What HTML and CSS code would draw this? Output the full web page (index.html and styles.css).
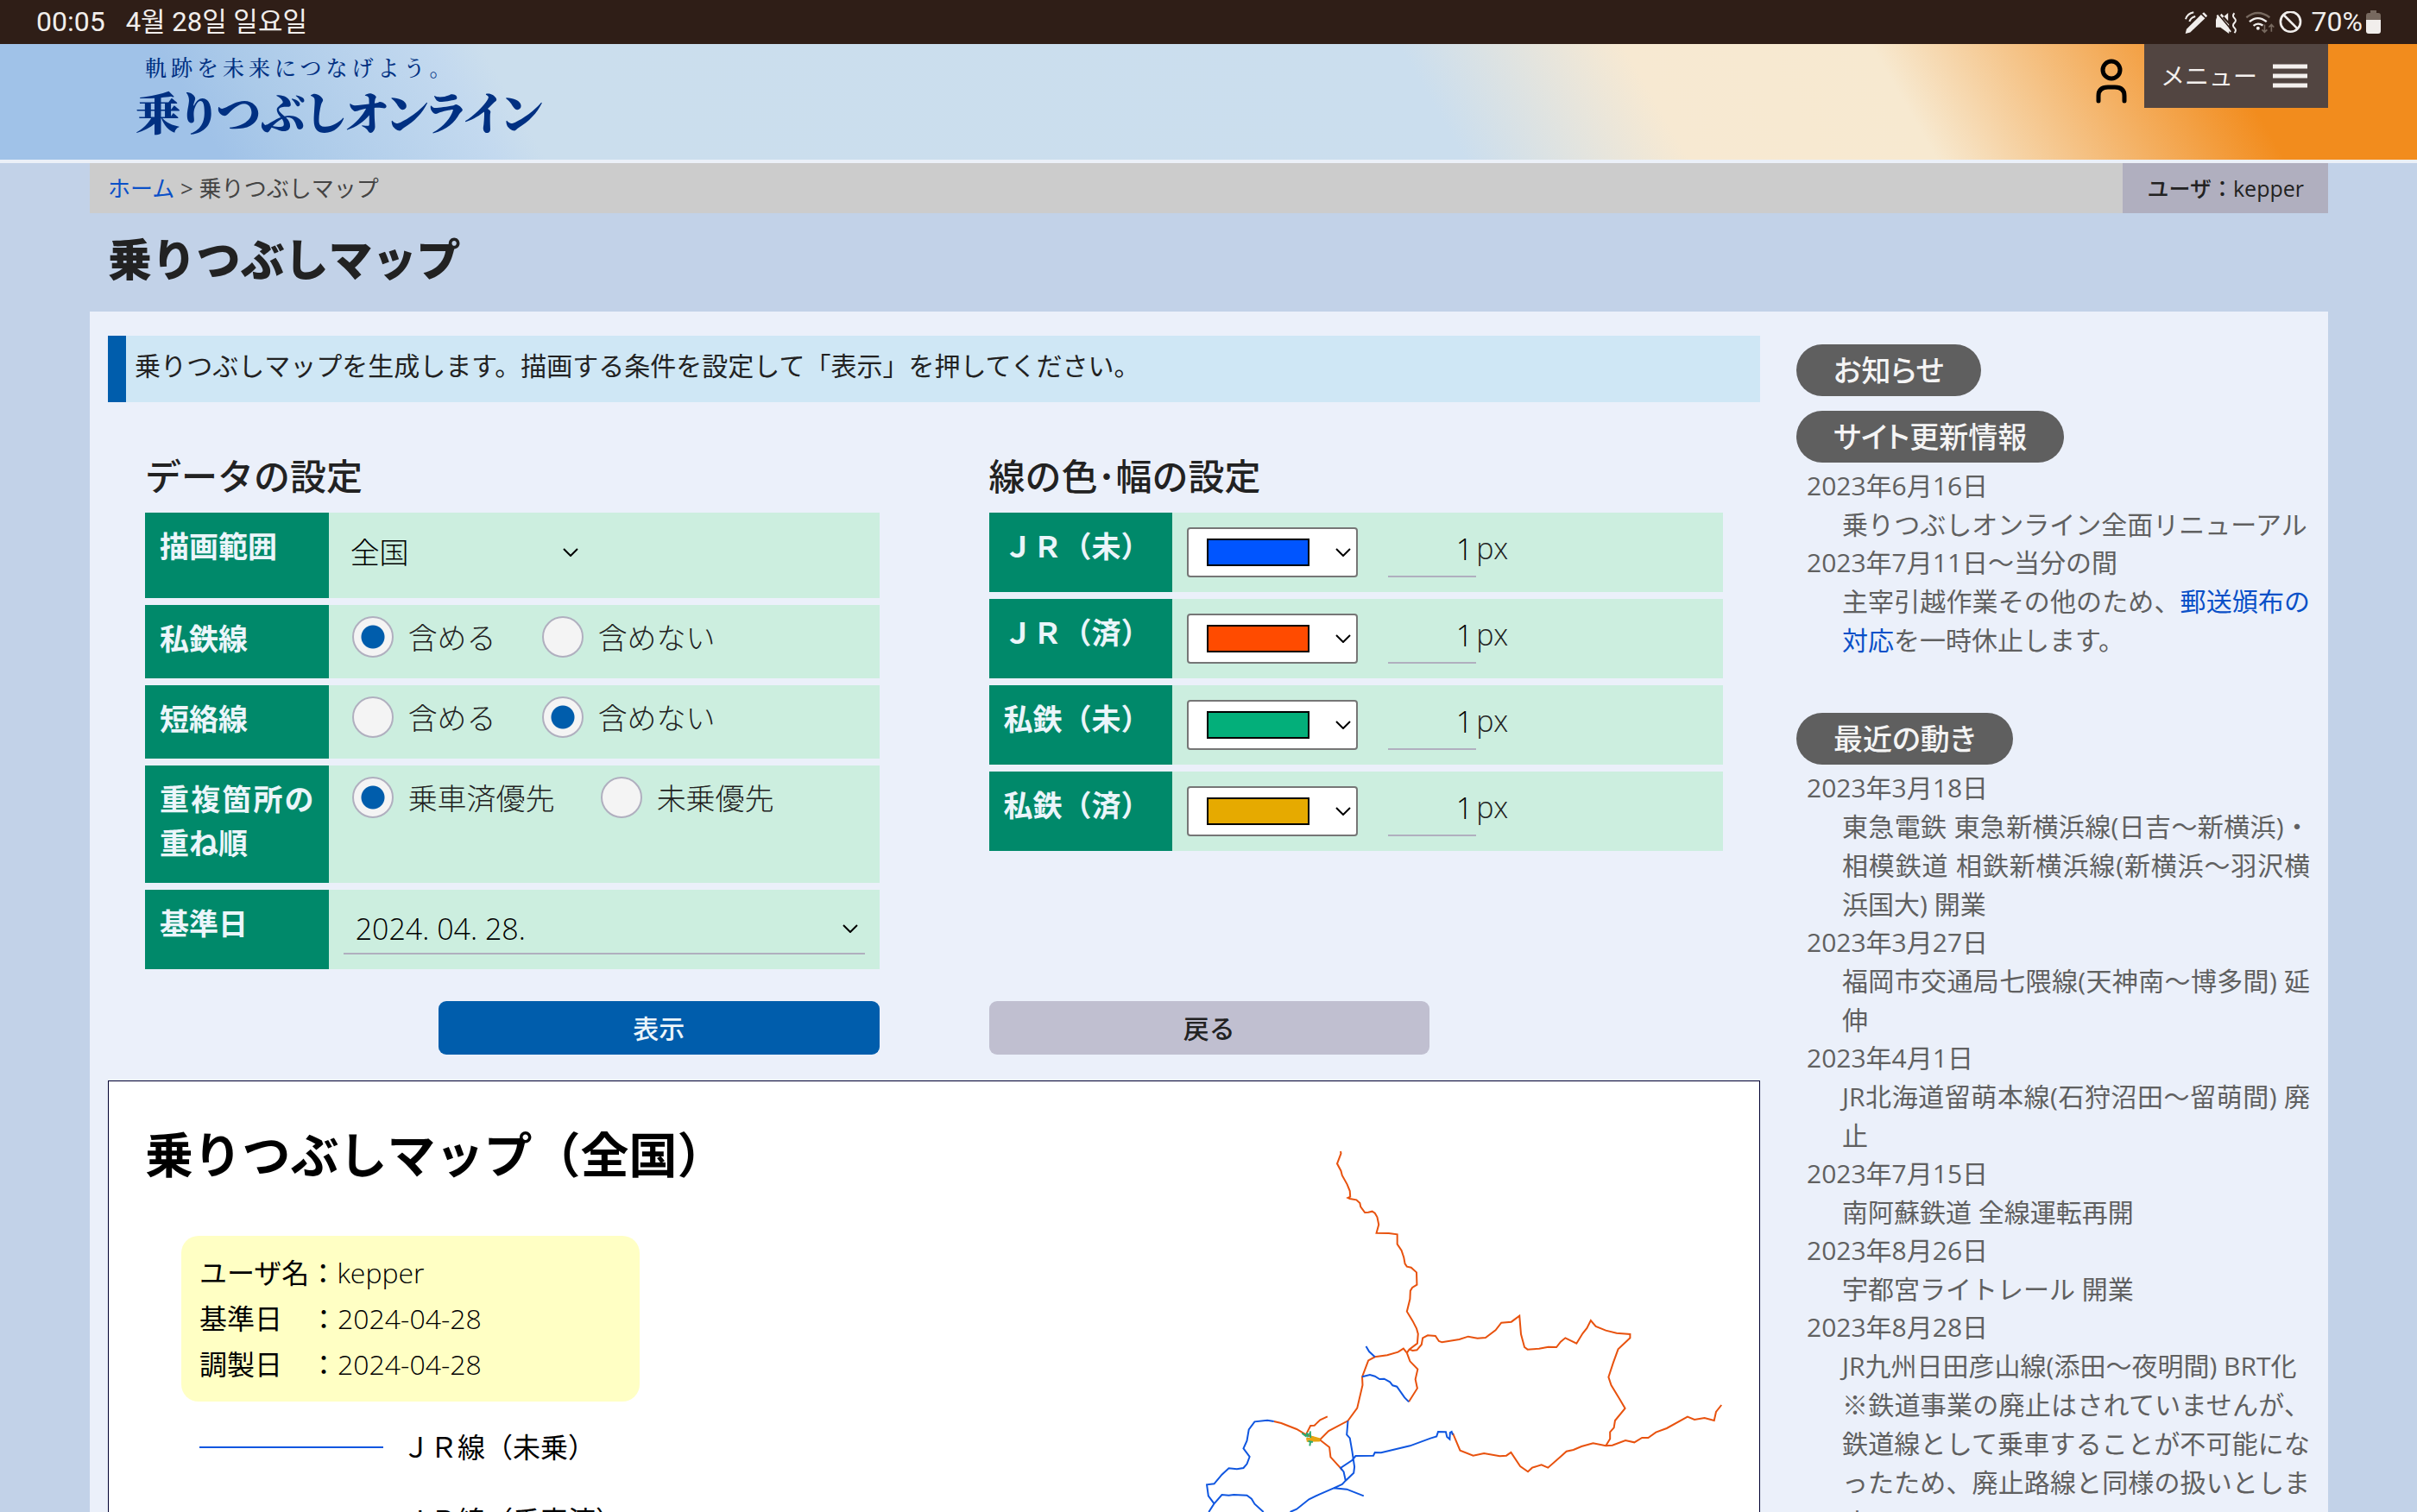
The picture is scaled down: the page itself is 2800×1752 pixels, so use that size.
FILE: index.html
```html
<!DOCTYPE html>
<html lang="ja">
<head>
<meta charset="utf-8">
<meta name="viewport" content="width=device-width, initial-scale=1">
<title>乗りつぶしマップ - 乗りつぶしオンライン</title>
<link rel="stylesheet" href="styles.css">
</head>
<body>
<div class="screen">
  <div class="status" lang="ko">
    <div class="status-left"><span>00:05</span><span class="status-date">4월 28일 일요일</span></div>
    <div class="status-right">
      <svg class="status-icons" viewBox="0 0 420 100" aria-hidden="true">
        <g fill="none" stroke="#f1eeec" stroke-width="7">
          <path d="M4 28Q10 8 32 4M17 36Q22 22 38 18" stroke-width="6"/>
          <path d="M3 79l4-16L58 12l14 13L20 74z" fill="#f1eeec" stroke="none"/>
          <path d="M62 8l6-4 12 12-5 6z" fill="#f1eeec" stroke="none"/>
          <path d="M110 30h14L153 6v28L130 8M110 30v27h16l30 22V46L118 8" fill="#f1eeec" stroke="none"/>
          <path d="M116 8l46 54" stroke="#2f1e17" stroke-width="5"/>
          <path d="M114 14l48 58" stroke-width="6"/>
          <path d="M175 7q-9 9 0 17t0 17t0 17t0 18" stroke-width="6"/>
          <path d="M217 22Q257-10 299 22" stroke="#77695f"/>
          <path d="M228 37Q257 12 288 37M242 51Q257 38 275 50"/>
          <circle cx="258" cy="60" r="6" fill="#f1eeec" stroke="none"/>
          <path d="M281 47v26M272 65l9 9 9-9M305 72V47M296 56l9-9 9 9" stroke="#77695f" stroke-width="5"/>
          <circle cx="372" cy="37" r="35" stroke-width="8"/>
          <path d="M348 13l48 48" stroke-width="8"/>
        </g>
      </svg>
      <span>70%</span>
      <svg class="battery" viewBox="0 0 17 27" aria-hidden="true">
        <path d="M5 0h7v3h2q3 0 3 3v5H0V6q0-3 3-3h2z" fill="#77695f"/>
        <path d="M0 11h17v13q0 3-3 3H3q-3 0-3-3z" fill="#f1eeec"/>
      </svg>
    </div>
  </div>

  <header class="header">
    <div class="logo">
      <p class="tagline">軌跡を未来につなげよう。</p>
      <p class="site-name">乗りつぶしオンライン</p>
    </div>
    <div class="header-tools">
      <svg class="person" viewBox="0 0 36 52" fill="none" stroke="#000" stroke-width="5" stroke-linecap="round" role="img" aria-label="ユーザ">
        <circle cx="18" cy="13" r="10"/>
        <path d="M3 49V43Q3 33 14 33h8Q33 33 33 43V49"/>
      </svg>
      <button class="menu" type="button">メニュー
        <svg class="bars" viewBox="0 0 40 28" aria-hidden="true"><path d="M0 3h40M0 14h40M0 25h40" stroke="#f4f0ee" stroke-width="5"/></svg>
      </button>
    </div>
  </header>

  <div class="wrap">
    <div class="crumbs">
      <nav class="crumb-path"><a href="#">ホーム</a> &gt; 乗りつぶしマップ</nav>
      <div class="user">ユーザ：kepper</div>
    </div>
    <h1 class="page-title">乗りつぶしマップ</h1>

    <div class="panel">
      <main class="main">
        <p class="notice">乗りつぶしマップを生成します。描画する条件を設定して「表示」を押してください。</p>

        <form class="form">
          <div class="columns">
            <section class="settings">
              <h2 class="settings-title">データの設定</h2>
              <div class="row">
                <label class="name" for="area">描画範囲</label>
                <div class="field">
                  <span class="picker area">
                    <select id="area"><option>全国</option></select>
                    <svg class="chevron" viewBox="0 0 18 10" aria-hidden="true"><path d="M1 1l8 8 8-8"/></svg>
                  </span>
                </div>
              </div>
              <div class="row">
                <span class="name" id="n-private">私鉄線</span>
                <div class="field radios" role="radiogroup" aria-labelledby="n-private">
                  <label><input type="radio" name="private" checked>含める</label>
                  <label><input type="radio" name="private">含めない</label>
                </div>
              </div>
              <div class="row">
                <span class="name" id="n-short">短絡線</span>
                <div class="field radios" role="radiogroup" aria-labelledby="n-short">
                  <label><input type="radio" name="short">含める</label>
                  <label><input type="radio" name="short" checked>含めない</label>
                </div>
              </div>
              <div class="row">
                <span class="name" id="n-order">重複箇所の重ね順</span>
                <div class="field radios" role="radiogroup" aria-labelledby="n-order">
                  <label><input type="radio" name="order" checked>乗車済優先</label>
                  <label><input type="radio" name="order">未乗優先</label>
                </div>
              </div>
              <div class="row">
                <label class="name" for="date">基準日</label>
                <div class="field">
                  <span class="picker date">
                    <input id="date" type="text" value="2024. 04. 28.">
                    <svg class="chevron" viewBox="0 0 18 10" aria-hidden="true"><path d="M1 1l8 8 8-8"/></svg>
                  </span>
                </div>
              </div>
            </section>

            <section class="settings">
              <h2 class="settings-title">線の色･幅の設定</h2>
              <div class="row">
                <label class="name" for="c1">ＪＲ（未）</label>
                <div class="field line-style">
                  <span class="picker color"><input id="c1" type="color" value="#0055ff"><svg class="chevron" viewBox="0 0 18 10" aria-hidden="true"><path d="M1 1l8 8 8-8"/></svg></span>
                  <label class="width"><input type="text" inputmode="numeric" value="1">px</label>
                </div>
              </div>
              <div class="row">
                <label class="name" for="c2">ＪＲ（済）</label>
                <div class="field line-style">
                  <span class="picker color"><input id="c2" type="color" value="#ff4b00"><svg class="chevron" viewBox="0 0 18 10" aria-hidden="true"><path d="M1 1l8 8 8-8"/></svg></span>
                  <label class="width"><input type="text" inputmode="numeric" value="1">px</label>
                </div>
              </div>
              <div class="row">
                <label class="name" for="c3">私鉄（未）</label>
                <div class="field line-style">
                  <span class="picker color"><input id="c3" type="color" value="#03af7a"><svg class="chevron" viewBox="0 0 18 10" aria-hidden="true"><path d="M1 1l8 8 8-8"/></svg></span>
                  <label class="width"><input type="text" inputmode="numeric" value="1">px</label>
                </div>
              </div>
              <div class="row">
                <label class="name" for="c4">私鉄（済）</label>
                <div class="field line-style">
                  <span class="picker color"><input id="c4" type="color" value="#e6aa00"><svg class="chevron" viewBox="0 0 18 10" aria-hidden="true"><path d="M1 1l8 8 8-8"/></svg></span>
                  <label class="width"><input type="text" inputmode="numeric" value="1">px</label>
                </div>
              </div>
            </section>
          </div>
          <div class="actions">
            <button class="btn submit" type="submit">表示</button>
            <button class="btn back" type="button">戻る</button>
          </div>
        </form>

        <section class="map">
          <div class="map-info">
            <h2 class="map-title">乗りつぶしマップ（全国）</h2>
            <div class="map-meta">
              <p>ユーザ名：<span class="value">kepper</span></p>
              <p>基準日　：<span class="value">2024-04-28</span></p>
              <p>調製日　：<span class="value">2024-04-28</span></p>
            </div>
            <ul class="legend">
              <li><span class="swatch todo"></span>ＪＲ線（未乗）</li>
              <li><span class="swatch done"></span>ＪＲ線（乗車済）</li>
            </ul>
          </div>
          <svg class="map-lines" viewBox="0 0 1516 1356" preserveAspectRatio="none" role="img" aria-label="路線図">
            <g class="jr-done">
              <path d="M430 102L431 110L421 145L431 170L434 186L447 217L454 240L455 260L449 264L454 267L471 271L480 282L482 295L493 315L502 314L512 311L519 317L525 331L529 357L523 386L555 387L577 391L577 425L588 447L594 471L597 493L602 503L613 506L627 523L628 566L616 576L611 587L610 616L602 659L617 692L627 718L631 737L629 770L608 791L602 803"/>
              <path d="M608 791L617 795L628 793L640 774L643 751L656 742L676 744L685 762L693 766L738 756L761 746L785 752L806 750L832 724L847 698L873 695L894 674L898 738L907 783L915 791L945 788L969 782L990 783L1001 764L1013 751L1042 770L1058 735L1069 717L1079 690L1092 711L1118 725L1146 734L1181 738L1181 751L1150 790L1137 838L1125 887L1132 915L1155 966L1168 996L1142 1038L1139 1063L1129 1078L1129 1102L1118 1126"/>
              <path d="M721 1082L740 1142L774 1160L802 1152L843 1162L860 1160L872 1149L896 1197L916 1216L927 1202L951 1192L968 1202L1001 1163L1016 1145L1034 1140L1055 1128L1085 1117L1118 1126L1135 1124L1169 1107L1192 1114L1212 1098L1228 1098L1248 1079L1276 1065L1330 1025L1348 1035L1374 1029L1399 1038L1404 1008L1418 984"/>
              <path d="M602 803L593 788L579 800L551 811L519 817L502 829L486 886L487 915L473 995L449 1039L399 1074L376 1105L341 1088L316 1068L276 1047L257 1041"/>
              <path d="M602 803L610 832L630 860L624 895L629 926L607 973M341 1085L352 1056L362 1055L377 1036L396 1024M376 1105L401 1131L404 1165L430 1203L433 1210"/>
            </g>
            <g class="jr-todo">
              <path d="M496 780L504 798L519 817M486 886L506 879L519 884L531 894L543 893L558 904L565 916L576 920L596 958L607 973"/>
              <path d="M257 1041L240 1037L207 1042L192 1069L187 1108L178 1135L194 1164L187 1189L178 1203L161 1207L140 1204L122 1226L102 1258L83 1261L87 1300L102 1327L88 1356M102 1327L122 1296L140 1298L153 1296L187 1298L199 1310L207 1328L230 1356"/>
              <path d="M449 1039L446 1087L454 1099L460 1145L466 1199L464 1220L443 1247L434 1260L412 1273L376 1294L348 1312L316 1346L299 1356M412 1273L446 1277L490 1300M443 1247L438 1216L430 1203L460 1176L469 1161L515 1160L519 1149L535 1150L610 1126L663 1100L679 1093L683 1077L703 1078L706 1095L713 1103L714 1080L718 1077L721 1088"/>
            </g>
            <path class="private-done" d="M342 1108L376 1107M352 1095L377 1104M341 1102L364 1103"/>
            <path class="private-todo" d="M330 1082L342 1094M342 1080L346 1096M351 1075L352 1098M352 1110L350 1126M346 1110L358 1113M338 1090L350 1084"/>
          </svg>
        </section>
      </main>

      <aside class="side">
        <h2 class="pill">お知らせ</h2>
        <h3 class="pill">サイト更新情報</h3>
        <dl class="news">
          <dt>2023年6月16日</dt>
          <dd>乗りつぶしオンライン全面リニューアル</dd>
          <dt>2023年7月11日～当分の間</dt>
          <dd>主宰引越作業その他のため、<a href="#">郵送頒布の対応</a>を一時休止します。</dd>
        </dl>
        <h3 class="pill">最近の動き</h3>
        <dl class="news">
          <dt>2023年3月18日</dt>
          <dd>東急電鉄 東急新横浜線(日吉～新横浜)・相模鉄道 相鉄新横浜線(新横浜～羽沢横浜国大) 開業</dd>
          <dt>2023年3月27日</dt>
          <dd>福岡市交通局七隈線(天神南～博多間) 延伸</dd>
          <dt>2023年4月1日</dt>
          <dd>JR北海道留萌本線(石狩沼田～留萌間) 廃止</dd>
          <dt>2023年7月15日</dt>
          <dd>南阿蘇鉄道 全線運転再開</dd>
          <dt>2023年8月26日</dt>
          <dd>宇都宮ライトレール 開業</dd>
          <dt>2023年8月28日</dt>
          <dd>JR九州日田彦山線(添田～夜明間) BRT化<br>※鉄道事業の廃止はされていませんが、鉄道線として乗車することが不可能になったため、廃止路線と同様の扱いとします。</dd>
        </dl>
      </aside>
    </div>
  </div>
</div>
</body>
</html>
```
FILE: styles.css
```css
* { box-sizing: border-box; }

body, h1, h2, h3, p, dl, dd, ul {
  margin: 0;
  padding: 0;
}

body {
  background: #c2d2e8;
  color: #222;
  font-family: "Open Sans", "Noto Sans CJK JP", sans-serif;
  font-size: 30px;
  line-height: 45px;
}

button, input, select {
  margin: 0;
  border: 0;
  padding: 0;
  background: none;
  color: inherit;
  font: inherit;
  appearance: none;
}

a {
  color: #0a50c8;
  text-decoration: none;
}

.screen {
  height: 100vh;
  overflow: hidden;
}

/* device status bar */
.status {
  display: flex;
  justify-content: space-between;
  align-items: center;
  height: 51px;
  padding: 0 42px;
  background: #2f1e17;
  color: #f1eeec;
  font-family: Roboto, "Noto Sans CJK KR", sans-serif;
  font-size: 32px;
}

.status-left, .status-right {
  display: flex;
  align-items: center;
}

.status-left { gap: 24px; }
.status-right { gap: 4px; }

.status-date { font-size: 31px; }

.status-icons {
  width: 140px;
  height: 33px;
  margin: 7px 4px 0 0;
}

.battery {
  width: 17px;
  height: 27px;
}

/* site header */
.header {
  display: flex;
  justify-content: space-between;
  align-items: flex-start;
  height: 138px;
  padding: 0 103px 0 104px;
  border-bottom: 4px solid #ebf0f8;
  background: linear-gradient(60deg, #a0c2e8 9%, #abcae9 12%, #c3d9ef 20%, #cbdeed 22%, #cbdeee 59%, #f7e9d2 68%, #f7e9d0 78%, #f28c1d 92%);
}

.logo {
  padding: 9px 0 0 53px;
  color: #003082;
  font-family: "Noto Serif CJK JP", "Noto Serif JP", "Noto Sans CJK JP", serif;
}

.tagline {
  padding-left: 11px;
  font-size: 25px;
  font-weight: 500;
  line-height: 34px;
  letter-spacing: 5px;
}

.site-name {
  font-size: 52px;
  font-weight: 900;
  line-height: 70px;
  font-feature-settings: "palt";
}

.header-tools {
  display: flex;
  gap: 20px;
}

.person {
  width: 36px;
  height: 52px;
  margin-top: 17px;
}

.menu {
  display: flex;
  justify-content: space-between;
  align-items: center;
  width: 213px;
  height: 74px;
  padding: 0 24px 0 19px;
  background: #524541;
  color: #f4f0ee;
  font-size: 28px;
}

.bars {
  width: 40px;
  height: 28px;
}

.wrap { padding: 0 103px 0 104px; }

.crumbs {
  display: flex;
  justify-content: space-between;
  background: #ccc;
  color: #444;
  font-size: 26px;
  line-height: 58px;
}

.crumb-path { padding-left: 21px; }

.user {
  padding: 0 28px;
  background: #b0afbf;
  color: #222;
  font-size: 25px;
  font-weight: 500;
}

.page-title {
  padding: 0 21px 8px;
  font-size: 51px;
  font-weight: 900;
  line-height: 106px;
}

.panel {
  display: grid;
  grid-template-columns: minmax(0, 1fr) 595px;
  gap: 42px;
  padding: 28px 21px;
  background: #ebf0fa;
}

.notice {
  border-left: 21px solid #005dac;
  padding: 9px 10px 17px;
  background: #cfe7f5;
  line-height: 51px;
}

/* settings form */
.form { padding: 54px 43px 0; }

.columns {
  display: grid;
  grid-template-columns: 1fr 1fr;
  gap: 127px;
}

.settings {
  display: flex;
  flex-direction: column;
  gap: 8px;
}

.settings-title {
  padding-bottom: 2px;
  font-size: 42px;
  font-weight: 500;
  line-height: 64px;
}

.row {
  display: grid;
  grid-template-columns: 1fr 3fr;
  background: #cceedf;
  font-size: 34px;
  font-weight: 300;
  line-height: 51px;
}

.name {
  padding: 14px 17px 20px;
  background: #00896a;
  color: #ebf5fa;
  font-weight: 700;
  text-align: justify;
}

.field { padding: 17px; }

.radios {
  display: flex;
  gap: 53px;
  padding: 13px 27px;
}

.radios label {
  display: flex;
  align-items: flex-start;
  gap: 17px;
}

.radios input {
  width: 48px;
  height: 48px;
  border: 2px solid #b0afbf;
  border-radius: 50%;
  background: #f4f4f4;
}

.radios input:checked {
  background: radial-gradient(circle, #005dac 13px, #f4f4f4 14px);
}

.picker {
  display: grid;
  align-items: center;
  height: 58px;
}

.picker > * { grid-area: 1 / 1; }

.chevron {
  justify-self: end;
  width: 18px;
  height: 10px;
  margin-right: 8px;
  fill: none;
  stroke: #000;
  stroke-width: 2;
  pointer-events: none;
}

.area {
  width: 280px;
  margin-bottom: 7px;
}

.area select {
  height: 58px;
  padding-left: 8px;
  color: #000;
}

.date { border-bottom: 2px solid #b0afbf; }

.date input {
  width: 100%;
  padding-left: 14px;
  color: #000;
}

.line-style {
  display: flex;
  gap: 35px;
}

.color {
  width: 198px;
  border: 2px solid #767676;
  border-radius: 4px;
  background: #fff;
}

.color .chevron { margin-right: 6px; }

.color input {
  width: 119px;
  height: 32px;
  margin-left: 21px;
}

.color input::-webkit-color-swatch-wrapper { padding: 0; }

.color input::-webkit-color-swatch {
  border: 2px solid #000;
  border-radius: 0;
}

.width {
  display: flex;
  align-items: flex-start;
  line-height: 49px;
}

.width input {
  width: 102px;
  height: 58px;
  border-bottom: 2px solid #b0afbf;
  padding: 0 4px 7px 0;
  color: #000;
  text-align: right;
}

.actions {
  display: grid;
  grid-template-columns: 1fr 1fr;
  gap: 127px;
  padding: 37px 0 30px;
}

.btn {
  width: 60%;
  height: 62px;
  border-radius: 9px;
  font-weight: 500;
}

.submit {
  justify-self: end;
  background: #005dac;
  color: #ebf5fa;
}

.back { background: #c0bfd0; }

/* generated map */
.map {
  display: flex;
  justify-content: space-between;
  border: 1px solid #000030;
  background: #fff;
  color: #000;
  font-size: 32px;
  line-height: 53px;
}

.map-info { padding: 42px 0 0 42px; }

.map-title {
  font-size: 56px;
  font-weight: 700;
  line-height: 84px;
}

.map-meta {
  width: 531px;
  margin: 53px 0 0 42px;
  padding: 16px 21px 17px;
  border-radius: 20px;
  background: #ffffc4;
}

.value { font-weight: 300; }

.legend {
  padding: 10px 0 0 63px;
  list-style: none;
}

.legend li {
  display: flex;
  align-items: center;
  gap: 22px;
  height: 85px;
}

.swatch {
  width: 213px;
  height: 2px;
}

.todo { background: #0f56e0; }
.done { background: #e8520e; }

.map-lines {
  flex: none;
  width: 677px;
  height: 452px;
  margin-top: 47px;
  fill: none;
  stroke-width: 2;
}

.map-lines path { vector-effect: non-scaling-stroke; }
.jr-done { stroke: #e8520e; }
.jr-todo { stroke: #0f56e0; }
.private-todo { stroke: #2fa96f; }
.private-done { stroke: #e6a410; stroke-width: 3; }

/* sidebar */
.side {
  padding-top: 10px;
  color: #606060;
}

.pill {
  width: fit-content;
  margin-bottom: 17px;
  padding: 0 43px;
  border-radius: 30px;
  background: #5f5f5f;
  color: #f4f4f4;
  font-size: 34px;
  font-weight: 500;
  line-height: 60px;
  font-feature-settings: "palt";
}

h3.pill { margin-bottom: 5px; }

.news {
  padding-left: 12px;
  text-align: justify;
}

.news + .pill { margin-top: 62px; }

.news dt { line-height: 44px; }
.news dd { padding-left: 41px; }
```
